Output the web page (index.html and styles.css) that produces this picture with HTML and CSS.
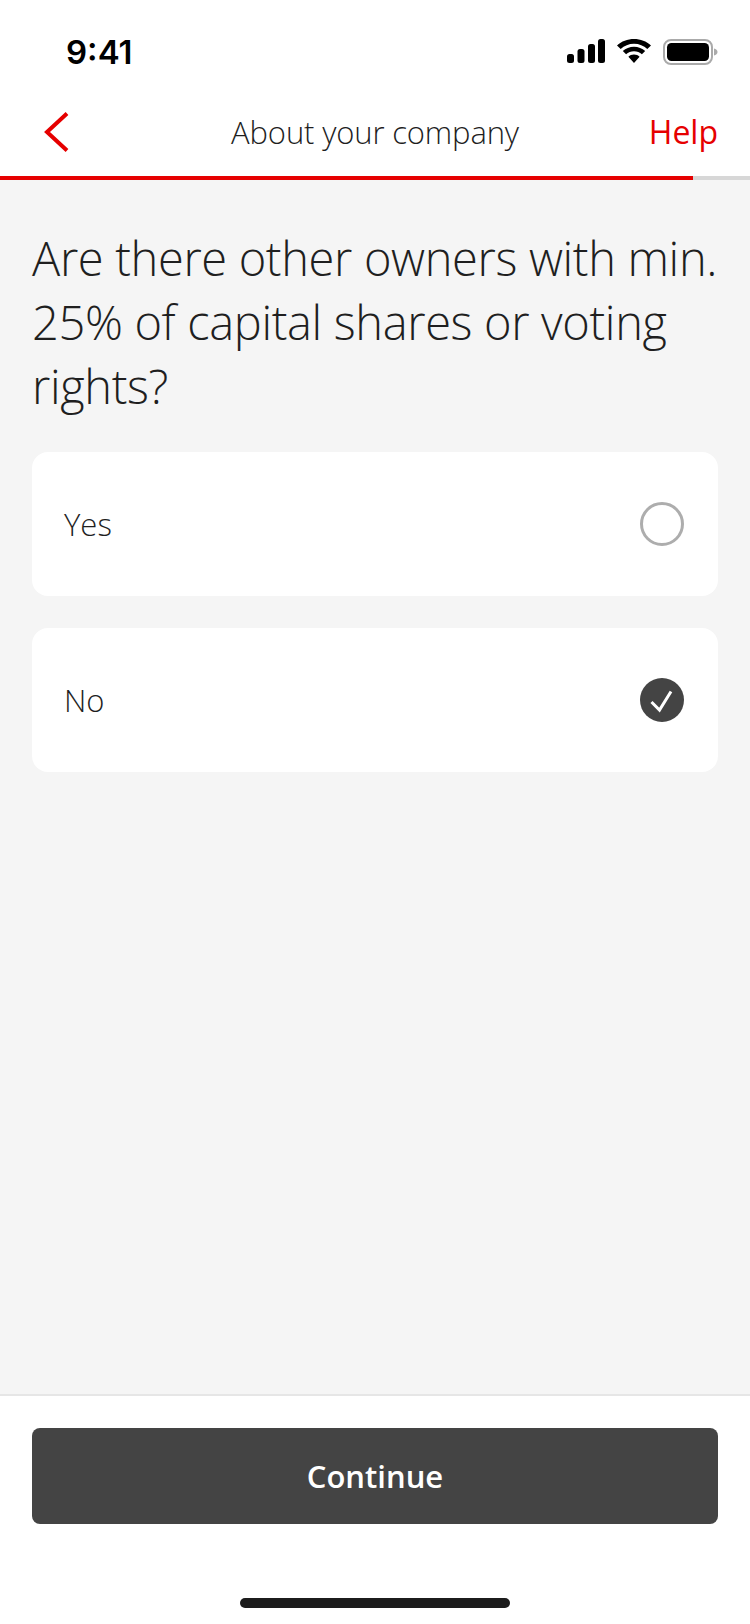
FILE: index.html
```html
<!DOCTYPE html>
<html lang="en">
<head>
<meta charset="utf-8">
<title>About your company</title>
<link rel="stylesheet" href="styles.css">
</head>
<body>
<div class="page">
  <header class="header">
    <div class="status">
      <span class="time">9:41</span>
      <div class="status-icons">
        <svg class="signal" width="38" height="24" viewBox="0 0 38 24"><rect x="0" y="15" width="7" height="9" rx="2.5"/><rect x="10.5" y="10" width="7" height="14" rx="2.5"/><rect x="21" y="5" width="7" height="19" rx="2.5"/><rect x="31" y="0" width="7" height="24" rx="2.5"/></svg>
        <svg class="wifi" width="34" height="24" viewBox="0 0 34 24"><path d="M17 4.800c5.100 0 9.800 2 13.300 5.300L34 6.400C29.500 2.400 23.500 0 17 0S4.500 2.400 0 6.400l3.700 3.700C7.200 6.800 11.900 4.800 17 4.800z"/><path d="M17 12.300c3 0 5.800 1.100 7.900 3l3.300-3.300C25.300 9.300 21.300 7.700 17 7.700S8.700 9.300 5.800 12l3.300 3.300c2.100-1.900 4.900-3 7.900-3z"/><path d="M17 15.500c-2.200 0-4.200.9-5.600 2.200L17 24l5.600-6.300c-1.400-1.300-3.400-2.200-5.600-2.200z"/></svg>
        <svg class="battery" width="55" height="26" viewBox="0 0 55 26"><rect x="1" y="1" width="48" height="24" rx="7" class="batt-edge"/><rect x="4" y="4" width="42" height="18" rx="4.500"/><path d="M51 9.500c2 .6 3.500 1.800 3.500 3.500s-1.500 2.900-3.500 3.500z" class="batt-cap"/></svg>
      </div>
    </div>
    <nav class="nav">
      <svg class="back" width="26" height="42" viewBox="0 0 26 42"><path d="M23 2.500 3 21l20 18.500"/></svg>
      <h1 class="nav-title">About your company</h1>
      <a class="help">Help</a>
    </nav>
    <div class="progress"><div class="progress-fill" style="width:693px"></div></div>
  </header>
  <main class="main">
    <h2 class="question">Are there other owners with min. 25% of capital shares or voting rights?</h2>
    <div class="options">
      <div class="option">
        <span class="option-label">Yes</span>
        <span class="radio"></span>
      </div>
      <div class="option">
        <span class="option-label">No</span>
        <svg class="radio-on" width="44" height="44" viewBox="0 0 44 44"><circle cx="22" cy="22" r="22"/><path d="M11.500 24l8 8L31 13.500"/></svg>
      </div>
    </div>
  </main>
  <footer class="footer">
    <button class="continue">Continue</button>
    <div class="home-bar"></div>
  </footer>
</div>
</body>
</html>
```
FILE: styles.css
```css
* { box-sizing: border-box; }
html, body { margin: 0; padding: 0; }
body { background: #fff; font-family: "Open Sans", "Noto Sans", sans-serif; color: #1f1f1f; }
.page { width: 750px; height: 1624px; display: flex; flex-direction: column; overflow: hidden; }
.header { background: #fff; flex: none; }
.status { height: 92px; display: flex; justify-content: space-between; align-items: flex-start; padding: 32px 32px 0 66px; }
.time { font-family: Inter, sans-serif; font-weight: 600; font-size: 33px; line-height: 40px; color: #000; }
.status-icons { display: flex; align-items: flex-start; gap: 12px; padding-top: 7px; }
.status-icons svg { display: block; fill: #000; }
.batt-edge { fill: none; stroke: #aaa; stroke-width: 2; }
.batt-cap { fill: #aaa; }
.nav { height: 84px; display: flex; align-items: center; justify-content: space-between; padding: 0 32px 0 44px; position: relative; }
.back { fill: none; stroke: #e60000; stroke-width: 4; display: block; margin-top: -5px; }
.back path { fill: none; }
.nav-title { position: absolute; left: 0; right: 0; top: 18px; margin: 0; text-align: center; font-size: 31px; letter-spacing: -0.15px; line-height: 44px; font-weight: 300; color: #1f1f1f; }
.help { font-size: 32px; line-height: 44px; font-weight: 400; color: #e60000; margin-top: -4px; }
.progress { height: 4px; background: #d7d7d7; }
.progress-fill { height: 100%; background: #e60000; }
.main { flex: 1; background: #f5f5f5; padding: 46px 32px 0; }
.question { margin: 0 -8px 34px 0; font-size: 47px; letter-spacing: -0.35px; line-height: 64px; font-weight: 300; color: #1f1f1f; }
.options { display: flex; flex-direction: column; gap: 32px; }
.option { height: 144px; background: #fff; border-radius: 16px; display: flex; align-items: center; justify-content: space-between; padding: 0 34px 0 32px; }
.option-label { font-size: 31px; font-weight: 300; line-height: 40px; color: #1f1f1f; }
.radio { width: 44px; height: 44px; border: 3.500px solid #adadad; border-radius: 50%; display: block; }
.radio-on { display: block; }
.radio-on circle { fill: #444; }
.radio-on path { fill: none; stroke: #fff; stroke-width: 3; }
.footer { flex: none; height: 230px; background: #fff; border-top: 2px solid #e6e6e6; padding: 32px 32px 0; display: flex; flex-direction: column; align-items: center; }
.continue { width: 100%; height: 96px; background: #444; color: #fff; border: 0; border-radius: 8px; font-family: inherit; font-size: 31px; font-weight: 600; flex: none; }
.home-bar { width: 270px; height: 10px; border-radius: 5px; background: #1c1c1c; margin-top: 74px; flex: none; }
```
